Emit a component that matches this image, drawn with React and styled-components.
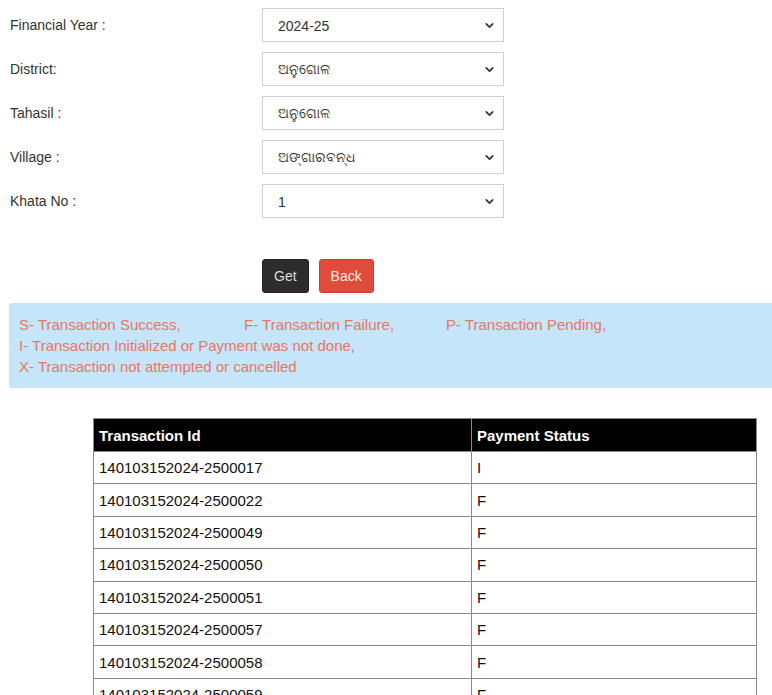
import React from 'react';
import styled, { createGlobalStyle } from 'styled-components';
import { ChevronDown } from 'lucide-react';

const GlobalStyle = createGlobalStyle`
  html, body {
    margin: 0;
    overflow: hidden;
    background: #fff;
    font-family: "Liberation Sans", Arial, sans-serif;
  }
`;

const fields = [
  { label: 'Financial Year :', value: '2024-25' },
  { label: 'District:', value: 'ଅନୁଗୋଳ' },
  { label: 'Tahasil :', value: 'ଅନୁଗୋଳ' },
  { label: 'Village :', value: 'ଅଙ୍ଗାରବନ୍ଧ' },
  { label: 'Khata No :', value: '1' },
];

const rows = [
  ['140103152024-2500017', 'I'],
  ['140103152024-2500022', 'F'],
  ['140103152024-2500049', 'F'],
  ['140103152024-2500050', 'F'],
  ['140103152024-2500051', 'F'],
  ['140103152024-2500057', 'F'],
  ['140103152024-2500058', 'F'],
  ['140103152024-2500059', 'F'],
];

const App = () => {
  return (
    <Page>
      <GlobalStyle />
      <Form>
        {fields.map(f => (
          <FieldRow key={f.label}>
            <Label>{f.label}</Label>
            <SelectBox>
              <SelectText>{f.value}</SelectText>
              <ChevronDown size={13} strokeWidth={3.2} color="#333" />
            </SelectBox>
          </FieldRow>
        ))}
      </Form>
      <Actions>
        <Button dark>Get</Button>
        <Button>Back</Button>
      </Actions>
      <Legend>
        <LegendLine>
          <LegendItem width={225}>S- Transaction Success,</LegendItem>
          <LegendItem width={202}>F- Transaction Failure,</LegendItem>
          <LegendItem>P- Transaction Pending,</LegendItem>
        </LegendLine>
        <LegendLine>I- Transaction Initialized or Payment was not done,</LegendLine>
        <LegendLine>X- Transaction not attempted or cancelled</LegendLine>
      </Legend>
      <Table>
        <thead>
          <tr>
            <Th>Transaction Id</Th>
            <Th>Payment Status</Th>
          </tr>
        </thead>
        <tbody>
          {rows.map(r => (
            <tr key={r[0]}>
              <Td>{r[0]}</Td>
              <Td>{r[1]}</Td>
            </tr>
          ))}
        </tbody>
      </Table>
    </Page>
  );
};

export default App;

const Page = styled.div`
  padding: 8px 0 0 9px;
  width: 830px;
`;

const Form = styled.div`
  display: flex;
  flex-direction: column;
  gap: 10px;
`;

const FieldRow = styled.div`
  display: grid;
  grid-template-columns: 253px 242px;
  align-items: center;
`;

const Label = styled.span`
  font-size: 14px;
  color: #333;
  padding-left: 1px;
`;

const SelectBox = styled.div`
  box-sizing: border-box;
  height: 34px;
  border: 1px solid #d0d0d0;
  display: flex;
  align-items: center;
  justify-content: space-between;
  padding: 0 7px 0 15px;
  font-size: 14px;
  color: #333;
`;

const SelectText = styled.span`
  font-family: "Liberation Sans", "Noto Sans", "DejaVu Sans", sans-serif;
  padding-top: 1px;
`;

const Actions = styled.div`
  display: flex;
  gap: 10px;
  margin: 41px 0 0 253px;
`;

const Button = styled.button`
  height: 34px;
  padding: 0 11px;
  border-radius: 3px;
  border: 1px solid ${p => (p.dark ? '#222' : '#c93d2e')};
  background: ${p => (p.dark ? '#2c2c2c' : '#e14b3b')};
  color: ${p => (p.dark ? '#ddd' : '#fbeae7')};
  font-family: "Liberation Sans", Arial, sans-serif;
  font-size: 14px;
`;

const Legend = styled.div`
  margin-top: 10px;
  background: #c5e5fb;
  border-radius: 3px;
  padding: 11px 10px;
  color: #e8775f;
  font-size: 15px;
  line-height: 21px;
`;

const LegendLine = styled.div`
  white-space: nowrap;
`;

const LegendItem = styled.span`
  display: inline-block;
  width: ${p => (p.width ? `${p.width}px` : 'auto')};
`;

const Table = styled.table`
  margin: 30px 0 0 84px;
  width: 664px;
  border-collapse: collapse;
  border: 1px solid #8a8a8a;
  font-size: 15px;
`;

const Th = styled.th`
  background: #000;
  color: #fff;
  text-align: left;
  font-weight: bold;
  height: 32px;
  padding: 0 5px;
  border: 1px solid #8a8a8a;
  &:first-child {
    width: 367px;
  }
`;

const Td = styled.td`
  height: 31.4px;
  padding: 0 5px;
  border: 1px solid #8a8a8a;
  color: #111;
`;
